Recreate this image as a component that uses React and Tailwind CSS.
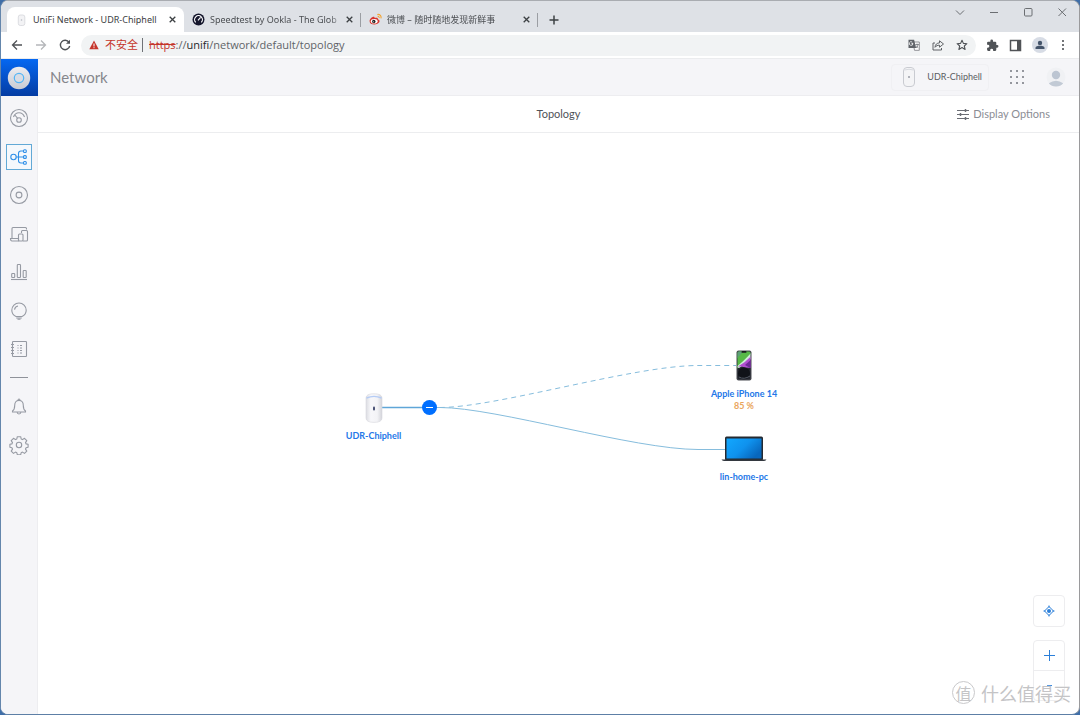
/**
 * UniFi Network topology page inside a browser window
 */

import React from 'react';

const TABS = [
  { id: 'unifi', title: 'UniFi Network - UDR-Chiphell', Icon: DeviceFavicon, active: true },
  { id: 'speedtest', title: 'Speedtest by Ookla - The Glob', Icon: SpeedtestIcon },
  { id: 'weibo', title: '微博 – 随时随地发现新鲜事', Icon: WeiboIcon },
];

const NAV_ITEMS = [
  { label: 'Dashboard', Icon: GaugeIcon },
  { label: 'Topology', Icon: TopologyIcon, active: true },
  { label: 'UniFi Devices', Icon: TargetIcon },
  { label: 'Client Devices', Icon: ClientsIcon },
  { label: 'Statistics', Icon: StatsIcon },
  { label: 'Insights', Icon: BulbIcon },
  { label: 'System Log', Icon: LogIcon },
];

const FOOTER_ITEMS = [
  { label: 'Notifications', Icon: BellIcon },
  { label: 'Settings', Icon: CogIcon },
];

export default function App() {
  return (
    <div className="flex min-h-screen flex-col bg-[#3f6ea8] font-['Lato','Noto_Sans_CJK_SC',sans-serif]">
      <div className="relative flex flex-1 flex-col overflow-hidden rounded-lg border border-t-[#a9acb1] border-r-[#9a9a9c] border-b-[#5d7fa6] border-l-[#6486ac] bg-white">
        <TabStrip />
        <Toolbar />
        <div className="flex flex-1">
          <Sidebar />
          <div className="flex min-w-0 flex-1 flex-col">
            <Header />
            <TitleBar />
            <Canvas />
          </div>
        </div>
        <Watermark />
      </div>
    </div>
  );
}

/* Browser window */

function TabStrip() {
  return (
    <div className="flex h-[31px] items-end bg-[#dee1e6] pl-[6px] font-['Noto_Sans','Noto_Sans_CJK_SC',sans-serif]">
      {TABS.map((tab) => (
        <Tab key={tab.id} {...tab} />
      ))}
      <button aria-label="New tab" className="flex h-[25px] w-8 items-center justify-center text-[#3c4043]">
        <svg width="10" height="10" viewBox="0 0 10 10" fill="none" stroke="currentColor" strokeWidth="1.5">
          <path d="M5 .5v9M.5 5h9" />
        </svg>
      </button>
      <div className="ml-auto flex h-full items-start text-[#6b6e72]">
        <WindowButton label="Search tabs">
          <path d="M2 4.500l4 4 4-4" />
        </WindowButton>
        <WindowButton label="Minimize">
          <path d="M2 6.500h8" />
        </WindowButton>
        <WindowButton label="Maximize">
          <rect x="2.500" y="2.500" width="7.500" height="7.500" rx="1" />
        </WindowButton>
        <WindowButton label="Close">
          <path d="M2.500 2.500l7.500 7.500M10 2.500l-7.500 7.500" />
        </WindowButton>
      </div>
    </div>
  );
}

function Tab({ title, Icon, active }) {
  return (
    <div
      className={
        active
          ? 'flex h-[25px] w-[177px] items-center rounded-t-lg bg-white pr-[6px] pl-[8px]'
          : 'flex h-[25px] w-[177px] items-center pr-[6px] pl-[8px]'
      }
    >
      <Icon />
      <span
        className={
          active
            ? 'ml-[5px] flex-1 text-[9px] whitespace-nowrap text-[#3c4043]'
            : 'ml-[5px] flex-1 mask-r-from-90% text-[9px] whitespace-nowrap text-[#4b4e52]'
        }
      >
        {title}
      </span>
      <button aria-label={`Close ${title}`} className="flex size-3 items-center justify-center text-[#3c4043]">
        <svg width="7" height="7" viewBox="0 0 7 7" fill="none" stroke="currentColor" strokeWidth="1.300">
          <path d="M.7 .7l5.600 5.600M6.300 .7L.7 6.300" />
        </svg>
      </button>
      {!active && <span className="-mr-[6px] ml-[5px] h-[14px] w-px bg-[#9b9ea3]" />}
    </div>
  );
}

function WindowButton({ label, children }) {
  return (
    <button aria-label={label} className="flex h-[21px] w-[34px] items-center justify-center">
      <svg width="12" height="12" viewBox="0 0 12 12" fill="none" stroke="currentColor" strokeWidth="1">
        {children}
      </svg>
    </button>
  );
}

function Toolbar() {
  return (
    <div className="flex h-[27px] items-center border-b border-[#ebecee] bg-white pr-[11px] pl-[9px] text-[#505357]">
      <button aria-label="Back" className="flex w-[24px] justify-start">
        <svg width="14" height="14" viewBox="0 0 14 14" fill="none" stroke="currentColor" strokeWidth="1.300">
          <path d="M12 7H3M7 2.500L2.500 7 7 11.500" />
        </svg>
      </button>
      <button aria-label="Forward" className="flex w-[24px] justify-start text-[#b5b7ba]">
        <svg width="14" height="14" viewBox="0 0 14 14" fill="none" stroke="currentColor" strokeWidth="1.300">
          <path d="M2 7h9M7 2.500L11.500 7 7 11.500" />
        </svg>
      </button>
      <button aria-label="Reload" className="flex w-[23px] justify-start">
        <svg width="14" height="14" viewBox="0 0 14 14" fill="none" stroke="currentColor" strokeWidth="1.400">
          <path d="M11 4.300A4.700 4.700 0 1 0 11.700 8" />
          <path d="M12 1.800v4H8z" fill="currentColor" stroke="none" />
        </svg>
      </button>
      <div className="flex h-[21px] flex-1 items-center rounded-full bg-[#f1f3f4] pr-2 pl-2 font-['Open_Sans','Noto_Sans_CJK_SC',sans-serif] text-[11px]">
        <svg width="10" height="10" viewBox="0 0 10 10">
          <path d="M5 .5L9.700 9.300H.3z" fill="#c5352b" />
          <path d="M5 3.500v3M5 7.200v1" stroke="#fff" strokeWidth="1" />
        </svg>
        <span className="ml-[6px] text-[#c5352b]">不安全</span>
        <span className="mr-[6px] ml-[4px] h-[14px] w-px bg-[#6f7276]" />
        <a href="#topology" className="flex-1 whitespace-nowrap text-[#5f6368]">
          <span className="text-[#c5352b] line-through">https</span>://<span className="text-[#26282b]">unifi</span>
          /network/default/topology
        </a>
        <div className="flex items-center gap-[12px]">
          <button aria-label="Translate this page">
            <TranslateIcon />
          </button>
          <button aria-label="Share this page">
            <ShareIcon />
          </button>
          <button aria-label="Bookmark this tab">
            <StarIcon />
          </button>
        </div>
      </div>
      <div className="ml-[10px] flex items-center gap-[10px]">
        <button aria-label="Extensions">
          <PuzzleIcon />
        </button>
        <button aria-label="Side panel">
          <svg width="13" height="13" viewBox="0 0 13 13">
            <path d="M1.500 1.500h10v10h-10z" fill="none" stroke="currentColor" strokeWidth="1.500" />
            <path d="M8 1.500h4v10H8z" fill="currentColor" />
          </svg>
        </button>
        <button aria-label="Profile" className="flex size-4 items-center justify-center rounded-full bg-[#d7dce5] text-[#44546a]">
          <svg width="10" height="10" viewBox="0 0 10 10" fill="currentColor">
            <circle cx="5" cy="3" r="2.200" />
            <path d="M.5 9V7.700C.5 6.300 3 5.800 5 5.800s4.500.5 4.500 1.900V9z" />
          </svg>
        </button>
        <button aria-label="Browser menu" className="px-[3px]">
          <svg width="4" height="12" viewBox="0 0 4 12" fill="currentColor">
            <circle cx="2" cy="2" r="1.100" />
            <circle cx="2" cy="6" r="1.100" />
            <circle cx="2" cy="10" r="1.100" />
          </svg>
        </button>
      </div>
    </div>
  );
}

/* UniFi application */

function Sidebar() {
  return (
    <nav className="flex w-[37px] shrink-0 flex-col items-center border-r border-[#ededf0] bg-[#f5f5f8]">
      <a
        href="#home"
        aria-label="UniFi"
        className="flex h-[37px] w-[37px] items-center justify-center bg-linear-to-b from-[#0568f2] to-[#043ca3]"
      >
        <svg width="24" height="24" viewBox="0 0 24 24">
          <defs>
            <linearGradient id="puck" x1="0" y1="0" x2="0" y2="1">
              <stop offset="0" stopColor="#ececf0" />
              <stop offset="1" stopColor="#c9cbd3" />
            </linearGradient>
          </defs>
          <circle cx="12" cy="12" r="11.200" fill="url(#puck)" />
          <circle cx="12" cy="12" r="4.700" fill="#d8dce5" stroke="#55b5f5" strokeWidth="1.200" />
        </svg>
      </a>
      <div className="mt-[9px] flex h-[257px] flex-col items-center justify-between">
        {NAV_ITEMS.map((item) => (
          <NavLink key={item.label} {...item} />
        ))}
      </div>
      <div className="mt-[15px] mb-[16px] h-px w-[18px] bg-[#8f929a]" />
      <div className="flex flex-col items-center gap-[12px]">
        {FOOTER_ITEMS.map((item) => (
          <NavLink key={item.label} {...item} />
        ))}
      </div>
    </nav>
  );
}

function NavLink({ label, Icon, active }) {
  return (
    <a
      href="#nav"
      aria-label={label}
      className={
        active
          ? 'flex size-[26px] items-center justify-center border border-[#62a9d6] bg-[#f5f8fc] text-[#2f8fe8]'
          : 'flex size-[26px] items-center justify-center text-[#969aa3]'
      }
    >
      <svg width="20" height="20" viewBox="0 0 20 20" fill="none" stroke="currentColor" strokeWidth="1.100" className="shrink-0">
        <Icon />
      </svg>
    </a>
  );
}

function Header() {
  return (
    <header className="flex h-[37px] items-center border-b border-[#ededf0] bg-[#f5f5f8] pr-[13px] pl-[12px]">
      <h1 className="flex-1 text-[15px] text-[#85868c]">Network</h1>
      <button className="flex h-[27px] items-center rounded border border-[#f0f0f3] pr-[6px] pl-[11px] text-[9px] text-[#5b5d63]">
        <svg width="12" height="20" viewBox="0 0 12 20" className="mr-[12px]">
          <rect x=".5" y=".5" width="11" height="19" rx="3.500" fill="#f4f4f6" stroke="#c9cbd1" />
          <path d="M1.500 3q4.500-1.500 9 0" stroke="#d8dae0" fill="none" />
          <circle cx="6" cy="10" r="1" fill="#9a9da6" />
        </svg>
        UDR-Chiphell
      </button>
      <button aria-label="Applications" className="ml-[20px]">
        <svg width="16" height="16" viewBox="0 0 16 16" fill="#7d8088">
          {[2, 8, 14].map((y) => [2, 8, 14].map((x) => <circle key={`${x}-${y}`} cx={x} cy={y} r="1.100" />))}
        </svg>
      </button>
      <button aria-label="Account" className="ml-[21px]">
        <svg width="20" height="20" viewBox="0 0 20 20">
          <circle cx="10" cy="10" r="9.500" fill="#f0f1f4" />
          <circle cx="10" cy="8" r="4.200" fill="#bcc5d2" />
          <path d="M2.800 16.300q7.200-5 14.400 0Q14.500 19.500 10 19.500t-7.200-3.200z" fill="#c2cad5" />
        </svg>
      </button>
    </header>
  );
}

function TitleBar() {
  return (
    <div className="grid h-[37px] grid-cols-3 items-center border-b border-[#ecedef] px-[29px]">
      <h2 className="col-start-2 text-center text-[11px] text-[#4f5258]">Topology</h2>
      <button className="flex items-center justify-self-end text-[11px] text-[#8b8d94]">
        <svg width="12" height="12" viewBox="0 0 12 12" fill="none" stroke="#6a6d74" className="mr-1">
          <path d="M0 2.500h12M0 6.500h12M0 10.500h12" />
          <path d="M8.500 1v3M3.500 5v3M8.500 9v3" strokeWidth="1.500" />
        </svg>
        Display Options
      </button>
    </div>
  );
}

function Canvas() {
  return (
    <main className="relative flex flex-1 items-center justify-center">
      {/* Node graph, nodes are placed by their position on the canvas */}
      <div className="relative h-[151px] w-[445px]">
        <svg width="445" height="151" viewBox="0 0 445 151" fill="none" stroke="#86bddd" className="absolute inset-0">
          <path d="M45 59.500H94" stroke="#5fa6d8" strokeWidth="1.300" />
          <path d="M104 59.500C160 59.500 298 17.500 362 17.500H400" strokeDasharray="5 4" />
          <path d="M94 59.500H104C160 59.500 298 101.500 362 101.500H390" />
        </svg>
        <GraphNode className="absolute top-[45px] left-0 w-[75px]" name="UDR-Chiphell">
          <svg width="18" height="30" viewBox="0 0 18 30">
            <defs>
              <linearGradient id="router" x1="0" y1="0" x2="1" y2="0">
                <stop offset="0" stopColor="#dcdde2" />
                <stop offset=".3" stopColor="#f7f7fa" />
                <stop offset=".7" stopColor="#f3f3f6" />
                <stop offset="1" stopColor="#d3d4da" />
              </linearGradient>
            </defs>
            <path d="M1 5Q1 .7 9 .7T17 5V25Q17 29.400 9 29.400T1 25z" fill="url(#router)" stroke="#d6d7dd" strokeWidth=".6" />
            <path d="M1.500 5Q9 1.800 16.500 5" fill="none" stroke="#b5ccf5" strokeWidth="1.400" />
            <rect x="8" y="13.500" width="2" height="4" rx="1" fill="#4a5275" />
          </svg>
        </GraphNode>
        <button
          aria-label="Collapse"
          className="absolute top-[52px] left-[86px] flex size-[15px] items-center justify-center rounded-full bg-[#006fff]"
        >
          <span className="h-px w-[7px] bg-white" />
        </button>
        <GraphNode className="absolute top-[2px] left-[363px] w-[90px]" name="Apple iPhone 14" detail="85 %">
          <svg width="16" height="31" viewBox="0 0 16 31">
            <defs>
              <clipPath id="screen">
                <rect x="1.500" y="1.500" width="13" height="28" rx="1.500" />
              </clipPath>
            </defs>
            <rect x=".5" y=".5" width="15" height="30" rx="2" fill="#4a4d53" />
            <g clipPath="url(#screen)">
              <rect width="16" height="31" fill="#23262e" />
              <path d="M0 0h16v3L0 20z" fill="#57b947" />
              <path d="M0 0h8L0 10z" fill="#5d9f78" />
              <path d="M0 17Q6 13 16 2v6Q10 14 3 18z" fill="#cfead8" />
              <path d="M2 16.500Q10 12 16 5v13Q10 18 5 16.500z" fill="#b14fd0" />
              <path d="M9 15l7-6v10z" fill="#6d2a96" />
              <circle cx="8" cy="23.500" r="6" fill="#101319" />
              <path d="M3 27q5 3 11-1" stroke="#545b66" fill="none" />
            </g>
            <rect x="5.500" y="1" width="5" height="1.800" rx=".9" fill="#17191d" />
          </svg>
        </GraphNode>
        <GraphNode className="absolute top-[86px] left-[363px] w-[90px]" name="lin-home-pc">
          <svg width="46" height="30" viewBox="0 0 46 30">
            <defs>
              <linearGradient id="desktop" x1="0" y1="0" x2="1" y2=".6">
                <stop offset="0" stopColor="#12a8ff" />
                <stop offset=".55" stopColor="#0f92ee" />
                <stop offset="1" stopColor="#0867bd" />
              </linearGradient>
            </defs>
            <rect x="4" y="2.500" width="38" height="24" rx="1.500" fill="#252a31" />
            <rect x="5.500" y="4.500" width="35" height="20" fill="url(#desktop)" />
            <path d="M.5 25.500h45q-1 1.500-3 1.500h-39q-2 0-3-1.500z" fill="#33383f" />
          </svg>
        </GraphNode>
      </div>

      {/* Zoom controls float over the canvas */}
      <div className="absolute right-[14px] bottom-[13px] flex flex-col gap-[13px] text-[#2b7fd9]">
        <button aria-label="Center" className="flex size-8 items-center justify-center rounded-sm border border-[#ededef] bg-white">
          <svg width="12" height="12" viewBox="0 0 12 12" fill="none" stroke="currentColor">
            <path d="M6 1.500L10.500 6 6 10.500 1.500 6z" />
            <path d="M6 .5v2M6 9.500v2M.5 6h2M9.500 6h2" />
            <circle cx="6" cy="6" r="2" fill="currentColor" stroke="none" />
          </svg>
        </button>
        <div className="flex flex-col divide-y divide-[#ededef] rounded-sm border border-[#ededef] bg-white">
          <button aria-label="Zoom in" className="flex h-[30px] w-[30px] items-center justify-center">
            <svg width="11" height="11" viewBox="0 0 11 11" stroke="currentColor">
              <path d="M5.500 0v11M0 5.500h11" />
            </svg>
          </button>
          <button aria-label="Zoom out" className="flex h-[29px] w-[30px] items-center justify-center">
            <span className="h-px w-[5px] bg-current" />
          </button>
        </div>
      </div>
    </main>
  );
}

function GraphNode({ className, name, detail, children }) {
  return (
    <div className={className}>
      <div className="flex flex-col items-center text-center text-[9px] leading-[12px] font-bold text-[#2377e8]">
        <div className="mb-[7px]">{children}</div>
        <span className="whitespace-nowrap">{name}</span>
        {detail && <span className="text-[#eaa55c]">{detail}</span>}
      </div>
    </div>
  );
}

function Watermark() {
  return (
    <div className="pointer-events-none absolute right-[8px] bottom-[10px] flex items-center gap-[6px] font-['Noto_Sans_CJK_SC',sans-serif] text-[#c4c4c6]">
      <span className="flex size-[23px] items-center justify-center rounded-full border border-[#c9c9cb] bg-white/70 text-[16px] leading-none">
        值
      </span>
      <span className="text-[18px] leading-[18px] text-shadow-[0_0_2px_#fff]">什么值得买</span>
    </div>
  );
}

/* Tab icons */

function DeviceFavicon() {
  return (
    <svg width="13" height="14" viewBox="0 0 13 14" className="shrink-0">
      <rect x="3.300" y="2" width="6.500" height="10.500" rx="2" fill="#f3f3f5" stroke="#d4d5da" strokeWidth=".8" />
      <circle cx="6.500" cy="7" r=".8" fill="#b9bcc4" />
    </svg>
  );
}

function SpeedtestIcon() {
  return (
    <svg width="13" height="13" viewBox="0 0 13 13" className="shrink-0">
      <circle cx="6.500" cy="6.500" r="6" fill="#15162c" />
      <path d="M3.700 9.300a3.900 3.900 0 1 1 5.600 0" fill="none" stroke="#fff" strokeWidth="1.200" />
      <path d="M6 7.300L8.600 4.400" stroke="#fff" strokeWidth="1.200" />
    </svg>
  );
}

function WeiboIcon() {
  return (
    <svg width="13" height="13" viewBox="0 0 13 13" className="shrink-0">
      <path d="M.6 8.200C.6 5.800 4 3 5.400 4.100c.4.400.1 1 .1 1 1.800-.8 3.700-.6 3.300 1.100 3.600.9 1.500 5.300-3.500 5.300C2.700 11.500.6 10.300.6 8.200z" fill="#d8352d" />
      <ellipse cx="5.200" cy="8.300" rx="3.400" ry="2.300" fill="#fff" />
      <circle cx="4.800" cy="8.500" r="1.700" fill="#222" />
      <circle cx="4.300" cy="8.800" r=".5" fill="#fff" />
      <path d="M8.300 1.500c2.600-.5 4.300 1.400 3.600 3.800M8.600 3.400c1.100-.2 1.800.6 1.500 1.600" fill="none" stroke="#f3a32f" strokeWidth="1.100" />
    </svg>
  );
}

/* Toolbar icons */

function TranslateIcon() {
  return (
    <svg width="12" height="12" viewBox="0 0 12 12">
      <path d="M5 3h6.300v8.300H6.500z" fill="#fff" stroke="#77797d" strokeWidth=".8" />
      <path d="M.5 .7h5.600l2 8.300H.5z" fill="#5f6368" />
      <path d="M5 4.500H3.500M4.900 4.500A1.800 1.800 0 1 1 4.300 3.200" fill="none" stroke="#fff" strokeWidth=".8" />
      <path d="M7.300 5.500h3.500M9 4.500v1M10.200 5.500Q9.500 8 8 9M8 6.500q.8 1.500 2.300 2.300" fill="none" stroke="#5f6368" strokeWidth=".7" />
    </svg>
  );
}

function ShareIcon() {
  return (
    <svg width="12" height="12" viewBox="0 0 12 12" fill="none" stroke="currentColor" strokeWidth=".9" strokeLinejoin="round">
      <path d="M3 4H1v7h8.500V9" />
      <path d="M3 8.300C3.200 5.300 5 4 7.500 3.900V1.800L11.500 5 7.500 8.200V6.200C5.500 6.200 4.200 6.700 3 8.300z" />
    </svg>
  );
}

function StarIcon() {
  return (
    <svg width="12" height="12" viewBox="0 0 12 12" fill="none" stroke="currentColor" strokeWidth="1.100" strokeLinejoin="round">
      <path d="M6 1.200l1.400 3.200 3.500.3-2.600 2.300.8 3.400L6 8.600l-3.100 1.800.8-3.400L1.100 4.700l3.500-.3z" />
    </svg>
  );
}

function PuzzleIcon() {
  return (
    <svg width="13" height="13" viewBox="0 0 24 24" fill="currentColor">
      <path d="M20.500 11H19V7a2 2 0 0 0-2-2h-4V3.500a2.500 2.500 0 0 0-5 0V5H4a2 2 0 0 0-2 2v3.800h1.500a2.700 2.700 0 0 1 0 5.400H2V20a2 2 0 0 0 2 2h3.800v-1.500a2.700 2.700 0 0 1 5.400 0V22H17a2 2 0 0 0 2-2v-4h1.500a2.500 2.500 0 0 0 0-5z" />
    </svg>
  );
}

/* Navigation icons, drawn in a 20 by 20 box */

function GaugeIcon() {
  return (
    <>
      <circle cx="10" cy="10" r="8.500" />
      <path d="M4.500 9Q6 4.800 10 4.800T15.500 9" />
      <circle cx="10" cy="12" r="2.300" />
      <path d="M8.500 10.200L5.800 7" />
    </>
  );
}

function TopologyIcon() {
  return (
    <>
      <circle cx="4.500" cy="10" r="2.700" />
      <path d="M7.200 10h7.300M14.500 4H12q-2.500 0-2.500 2.500v7Q9.500 16 12 16h2.500" />
      <rect x="14.500" y="2.700" width="2.800" height="2.800" rx="1" />
      <rect x="14.500" y="8.600" width="2.800" height="2.800" rx="1" />
      <rect x="14.500" y="14.500" width="2.800" height="2.800" rx="1" />
    </>
  );
}

function TargetIcon() {
  return (
    <>
      <circle cx="10" cy="10" r="8.500" />
      <circle cx="10" cy="10" r="2.900" />
    </>
  );
}

function ClientsIcon() {
  return (
    <>
      <path d="M3 14.500V4.500Q3 3.500 4 3.500H16.500Q17.500 3.500 17.500 4.500V5.500M1.500 14.500H9.500V17H3Q1.500 17 1.500 14.500z" />
      <path d="M12.500 9V7.500Q12.500 6.500 13.500 6.500H17.500Q18.500 6.500 18.500 7.500V16Q18.500 17 17.500 17H14" />
      <rect x="9.500" y="10" width="4.500" height="7" rx="1" />
    </>
  );
}

function StatsIcon() {
  return (
    <>
      <path d="M2 17.500h16" />
      <rect x="2.700" y="11.500" width="3" height="4" rx=".7" />
      <rect x="8.300" y="2.500" width="3.200" height="13" rx=".7" />
      <rect x="14.200" y="8.500" width="3" height="7" rx=".7" />
    </>
  );
}

function BulbIcon() {
  return (
    <>
      <path d="M7 15.500Q2.800 13.500 2.800 9.200a7.200 7.200 0 0 1 14.400 0Q17.200 13.500 13 15.500zM7.200 17h5.600M8.500 18.300h3" />
      <path d="M5.500 8.700Q6 5.500 9 5" />
    </>
  );
}

function LogIcon() {
  return (
    <>
      <rect x="3.500" y="2.500" width="14" height="15" rx=".7" />
      <path d="M2 5.500h3M2 8.500h3M2 11.500h3M2 14.500h3" />
      <path d="M8.500 6.500h1M11 6.500h2M8.500 9h1M11 9h2M8.500 11.500h1M11 11.500h2M8.500 14h1M11 14h2" />
    </>
  );
}

function BellIcon() {
  return (
    <>
      <path d="M10 3.500q4.300 0 4.300 5 0 4 2.200 5.500v1H3.500v-1q2.200-1.500 2.200-5.500 0-5 4.300-5zM8 15q.3 2 2 2t2-2M9 3.500q0-1.500 1-1.500t1 1.500" />
    </>
  );
}

function CogIcon() {
  return (
    <>
      <circle cx="10" cy="10" r="2.700" />
      <path d="M8.300 1.700h3.400l.5 2.300 1.300.6 2-1.300 2.300 2.300-1.300 2 .6 1.300 2 .4v3l-2 .5-.6 1.300 1.300 2-2.300 2.300-2-1.300-1.300.6-.5 2H8.300l-.5-2-1.300-.6-2 1.300-2.300-2.300 1.300-2-.6-1.300-2-.5v-3l2-.4.6-1.300-1.300-2 2.300-2.300 2 1.300 1.300-.6z" strokeLinejoin="round" />
    </>
  );
}
